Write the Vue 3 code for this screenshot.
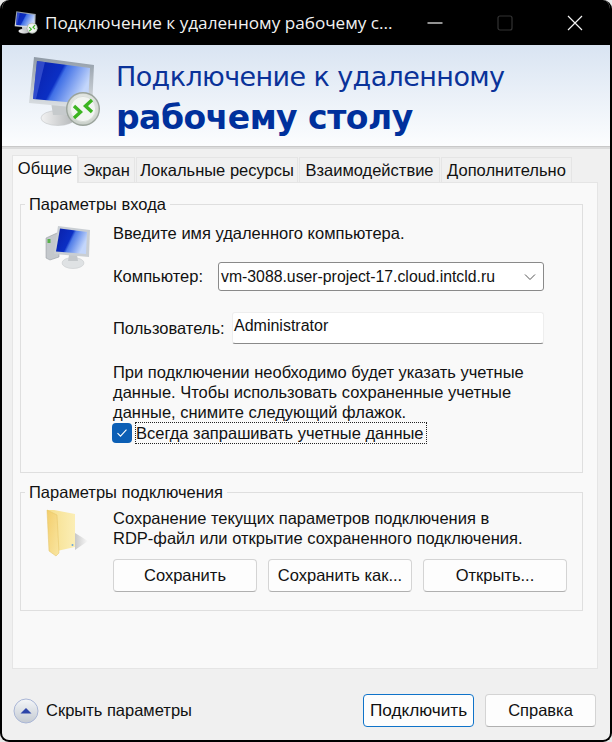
<template>
  <div class="window">
    <!-- Title bar -->
    <div class="titlebar">
      <svg class="title-icon" width="24" height="26" viewBox="0 0 74 74">
        <use href="#rdp-monitor" />
      </svg>
      <span class="title-text">Подключение к удаленному рабочему с...</span>
      <div class="win-controls">
        <svg width="16" height="16" viewBox="0 0 16 16"><path d="M0.5 8h15" stroke="#f4f4f4" stroke-width="1.2" /></svg>
        <svg width="16" height="16" viewBox="0 0 16 16"><rect x="1" y="1" width="14" height="14" rx="2" fill="none" stroke="#333" stroke-width="1.2" /></svg>
        <svg width="16" height="16" viewBox="0 0 16 16"><path d="M1 1l14 14M15 1L1 15" stroke="#f4f4f4" stroke-width="1.2" /></svg>
      </div>
    </div>

    <!-- Banner -->
    <div class="banner">
      <svg class="banner-icon" width="74" height="74" viewBox="0 0 74 74">
        <defs>
          <linearGradient id="scr" x1="0" y1="0" x2="1" y2="0.4">
            <stop offset="0" stop-color="#0a1fa8" />
            <stop offset="0.5" stop-color="#0b2fc4" />
            <stop offset="0.56" stop-color="#3f6fe6" />
            <stop offset="1" stop-color="#c3d6fb" />
          </linearGradient>
          <linearGradient id="frame" x1="0" y1="0" x2="0" y2="1">
            <stop offset="0" stop-color="#8f9aa6" />
            <stop offset="1" stop-color="#dfe3e6" />
          </linearGradient>
          <radialGradient id="badge" cx="0.5" cy="0.4" r="0.6">
            <stop offset="0" stop-color="#ffffff" />
            <stop offset="1" stop-color="#c9d0c9" />
          </radialGradient>
          <linearGradient id="foot" x1="0" y1="0" x2="1" y2="0">
            <stop offset="0" stop-color="#f2f2f2" />
            <stop offset="1" stop-color="#b3b6b8" />
          </linearGradient>
          <g id="rdp-monitor">
            <ellipse cx="31" cy="62" rx="17" ry="7.5" fill="url(#foot)" stroke="#c2c6c8" stroke-width="0.6" />
            <path d="M24 46h16l2 13H26z" fill="#c6cacc" />
            <path d="M7 1l60 8-2 44L2 47z" fill="url(#frame)" />
            <path d="M10 5l53 7-2 36L6 43z" fill="url(#scr)" />
            <path d="M10 5l8 1-9 37-3 0z" fill="#4a63d8" opacity="0.6" />
            <circle cx="56" cy="53" r="17" fill="#9aa39b" />
            <circle cx="56" cy="53" r="15.6" fill="url(#badge)" />
            <circle cx="56" cy="53" r="12.6" fill="#f2f5f2" stroke="#d5dad5" stroke-width="0.8" />
            <path d="M47 50l6.500 6-6.500 6" fill="none" stroke="#3cb521" stroke-width="3.4" />
            <path d="M65 44l-6.500 6 6.500 6" fill="none" stroke="#3cb521" stroke-width="3.4" />
          </g>
        </defs>
        <use href="#rdp-monitor" />
      </svg>
      <div class="banner-text">
        <div class="banner-line">Подключение к удаленному</div>
        <div class="banner-line banner-bold">рабочему столу</div>
      </div>
    </div>
    <div class="banner-rule"></div>

    <!-- Tabs -->
    <div class="tabs">
      <div
        v-for="(tab, i) in tabs"
        :key="tab"
        class="tab"
        :class="{ active: i === 0 }"
      >{{ tab }}</div>
    </div>

    <div class="panel">
      <fieldset class="group login">
        <legend>Параметры входа</legend>
        <div class="group-row">
          <svg class="side-icon" width="48" height="44" viewBox="0 0 48 44">
            <defs>
              <linearGradient id="scr2" x1="0" y1="0" x2="1" y2="0.4">
                <stop offset="0" stop-color="#0a1fa8" />
                <stop offset="0.52" stop-color="#0b2fc4" />
                <stop offset="0.6" stop-color="#4f7ce8" />
                <stop offset="1" stop-color="#c3d6fb" />
              </linearGradient>
            </defs>
            <path d="M1 12l11-5 2 2v22l-9 3-4-2z" fill="#c4c8cc" stroke="#8d9398" stroke-width="0.5" />
            <rect x="2.5" y="13" width="3" height="4" fill="#58b04a" />
            <ellipse cx="28" cy="37" rx="11" ry="5.5" fill="#dfe2e4" stroke="#c0c4c6" stroke-width="0.5" />
            <path d="M24 29h8l1 6h-10z" fill="#c4c8cb" />
            <path d="M13 0l32 4-1 27-35-3z" fill="#c9ced3" />
            <path d="M15 2.5l27 3.5-1 22-30-2.500z" fill="url(#scr2)" />
          </svg>
          <div class="group-body">
            <div class="intro">Введите имя удаленного компьютера.</div>
            <div class="field-row computer">
              <label>Компьютер:</label>
              <div class="combo">
                <span>vm-3088.user-project-17.cloud.intcld.ru</span>
                <svg width="12" height="8" viewBox="0 0 12 8"><path d="M1 1.500l5 5 5-5" fill="none" stroke="#555" stroke-width="1" /></svg>
              </div>
            </div>
            <div class="field-row user">
              <label>Пользователь:</label>
              <div class="input">Administrator</div>
            </div>
            <p class="note">При подключении необходимо будет указать учетные<br />данные. Чтобы использовать сохраненные учетные<br />данные, снимите следующий флажок.</p>
            <div class="check-row">
              <span class="checkbox">
                <svg width="12" height="10" viewBox="0 0 12 10"><path d="M1.500 5.200l3 3 6-6.500" fill="none" stroke="#fff" stroke-width="1.100" /></svg>
              </span>
              <span class="check-label">Всегда запрашивать учетные данные</span>
            </div>
          </div>
        </div>
      </fieldset>

      <fieldset class="group connection">
        <legend>Параметры подключения</legend>
        <div class="group-row">
          <svg class="side-icon folder" width="44" height="48" viewBox="0 0 44 48">
            <defs>
              <linearGradient id="fld" x1="0" y1="0" x2="1" y2="0">
                <stop offset="0" stop-color="#f6de8a" />
                <stop offset="1" stop-color="#fbeeb6" />
              </linearGradient>
              <linearGradient id="fld2" x1="0" y1="0" x2="1" y2="1">
                <stop offset="0" stop-color="#f3ce6c" />
                <stop offset="1" stop-color="#f9e6a2" />
              </linearGradient>
              <linearGradient id="shade" x1="0" y1="0" x2="1" y2="0">
                <stop offset="0" stop-color="#8c8c8c" stop-opacity="0.45" />
                <stop offset="1" stop-color="#8c8c8c" stop-opacity="0" />
              </linearGradient>
            </defs>
            <path d="M29 24l13 8-13 9z" fill="url(#shade)" />
            <path d="M1 1l7 0 21 4v33l-18 4z" fill="url(#fld)" />
            <path d="M1 1l10 5 2 38-3 3-7-5z" fill="url(#fld2)" stroke="#e5c364" stroke-width="0.5" />
            <circle cx="26.500" cy="36" r="1" fill="#6aa5dc" />
          </svg>
          <div class="group-body">
            <div class="save-text">Сохранение текущих параметров подключения в<br />RDP-файл или открытие сохраненного подключения.</div>
            <div class="save-buttons">
              <button class="btn">Сохранить</button>
              <button class="btn">Сохранить как...</button>
              <button class="btn">Открыть...</button>
            </div>
          </div>
        </div>
      </fieldset>
    </div>

    <!-- Footer -->
    <div class="footer">
      <div class="toggle">
        <svg width="26" height="26" viewBox="0 0 26 26">
          <defs>
            <linearGradient id="tgl" x1="0" y1="0" x2="0" y2="1">
              <stop offset="0" stop-color="#f4f6f8" />
              <stop offset="1" stop-color="#c4cad2" />
            </linearGradient>
          </defs>
          <circle cx="13" cy="13" r="12" fill="url(#tgl)" stroke="#a9b6d6" stroke-width="1" />
          <path d="M7.500 15.500L13 10l5.500 5.500z" fill="#2c44a8" />
        </svg>
        <span>Скрыть параметры</span>
      </div>
      <div class="footer-buttons">
        <button class="btn primary">Подключить</button>
        <button class="btn">Справка</button>
      </div>
    </div>
  </div>
</template>

<script setup>
const tabs = ['Общие', 'Экран', 'Локальные ресурсы', 'Взаимодействие', 'Дополнительно']
</script>

<style>
html, body { background: #e9e9e9; }
</style>

<style scoped>
.window { width: 612px; height: 742px; box-sizing: border-box; background: #f0f0f0; border: 2px solid #000; border-top: 0; border-radius: 9px; overflow: hidden; font-family: "Liberation Sans", Arial, sans-serif; font-size: 16.5px; color: #111; display: flex; flex-direction: column; }

.titlebar { height: 45px; flex: none; background: #000; color: #f2f2f2; display: flex; align-items: center; padding-left: 12px; font-family: "Open Sans", "Noto Sans", sans-serif; }
.title-icon { flex: none; margin-right: 7px; }
.title-text { font-size: 17.150px; white-space: nowrap; flex: 1; }
.win-controls { display: flex; gap: 54px; padding-right: 27px; }

.banner { height: 101px; flex: none; background: linear-gradient(#d9e4f2, #fcfdfe); display: flex; box-sizing: border-box; padding: 11px 0 0 25px; }
.banner-icon { flex: none; }
.banner-text { margin-left: 15px; font-family: "DejaVu Sans", sans-serif; font-size: 27px; letter-spacing: -0.6px; color: #0a3299; }
.banner-line { line-height: 40px; height: 40px; white-space: nowrap; margin-top: 1px; }
.banner-bold { font-weight: 700; font-size: 33px; letter-spacing: -0.5px; color: #00309c; }
.banner-rule { height: 3px; flex: none; background: #dcdcdc; border-top: 1px solid #c9c9c9; box-sizing: border-box; }

.tabs { display: flex; height: 33px; flex: none; padding: 8px 0 0 10px; box-sizing: border-box; align-items: flex-end; }
.tab { flex: none; height: 25px; line-height: 25px; margin-right: 1px; background: #f0f0f0; border: 1px solid #e5e5e5; border-bottom: 0; box-sizing: border-box; white-space: nowrap; text-align: center; font-size: 16.5px; }
.tab:nth-child(1) { width: 66px; margin-right: 0; }
.tab:nth-child(2) { width: 57px; }
.tab:nth-child(3) { width: 162px; }
.tab:nth-child(4) { width: 141px; }
.tab:nth-child(5) { width: 131px; }
.tab.active { height: 28px; background: #f9f9f9; margin-bottom: -1px; position: relative; z-index: 1; }

.panel { height: 487px; flex: none; margin: 0 12px 0 10px; background: #f9f9f9; border: 1px solid #e5e5e5; box-sizing: border-box; padding: 12px 14px 0 7px; }

.group { margin: 0; padding: 0; border: 1px solid #dfdfdf; min-width: 0; }
.group legend { margin-left: 4px; padding: 0 4px; line-height: 18px; white-space: nowrap; }
.login { height: 276px; }
.connection { height: 126px; margin-top: 10px; }
.group-row { display: flex; align-items: flex-start; }
.side-icon { flex: none; margin-left: 24px; margin-top: 13px; }
.folder { margin-top: 8px; margin-left: 25px; }
.group-body { margin-left: 20px; flex: 1; min-width: 0; }
.folder + .group-body { margin-left: 23px; }

.intro { margin-top: 10px; line-height: 20px; white-space: nowrap; }
.field-row { display: flex; align-items: center; white-space: nowrap; }
.computer { margin-top: 19px; }
.computer label { width: 105px; flex: none; }
.user { margin-top: 21px; }
.user label { width: 119px; flex: none; margin-top: 1px; }
.combo { width: 326px; height: 29px; background: #fff; border: 1px solid #8a8a8a; border-radius: 3px; box-sizing: border-box; display: flex; align-items: center; justify-content: space-between; padding: 0 7px 0 2px; font-size: 15.8px; }
.input { width: 312px; height: 32px; background: #fff; border: 1px solid #eee; border-bottom: 1px solid #8a8a8a; border-radius: 3px; box-sizing: border-box; padding: 3px 2px 0 1px; line-height: 20px; font-size: 16px; }
.note { margin: 18px 0 0; line-height: 20px; white-space: nowrap; }
.check-row { display: flex; align-items: center; }
.checkbox { width: 20px; height: 20px; flex: none; background: #0c5fb5; border-radius: 4px; margin-left: -1px; display: flex; align-items: center; justify-content: center; }
.check-label { margin-left: 3px; height: 22px; line-height: 20px; border: 1px dotted #222; box-sizing: border-box; white-space: nowrap; width: 292px; }

.save-text { margin-top: 7px; line-height: 20px; white-space: nowrap; }
.save-buttons { display: flex; gap: 11px; margin-top: 11px; }
.btn { width: 144px; height: 33px; background: #fdfdfd; border: 1px solid #d4d4d4; border-bottom-color: #b0b0b0; border-radius: 4px; font-family: "Liberation Sans", Arial, sans-serif; font-size: 16.5px; color: #111; padding: 0; }

.footer { flex: 1; display: flex; justify-content: space-between; align-items: flex-start; padding: 25px 14px 0 11px; }
.toggle { display: flex; align-items: center; gap: 7px; height: 33px; }
.footer-buttons { display: flex; gap: 11px; }
.footer-buttons .btn { width: 111px; }
.btn.primary { border: 1px solid #0f73c9; font-size: 17.2px; }
</style>
